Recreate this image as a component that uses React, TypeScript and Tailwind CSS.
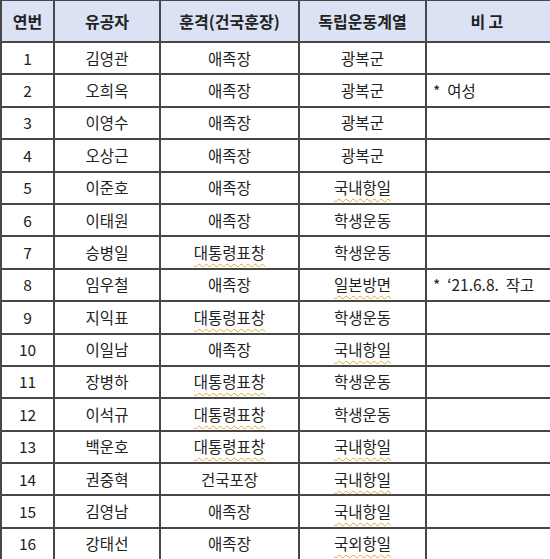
import clsx from 'clsx';

type Row = {
  no: number;
  name: string;
  grade: string;
  field: string;
  note?: string;
};

const ROWS: Row[] = [
  { no: 1, name: '김영관', grade: '애족장', field: '광복군' },
  { no: 2, name: '오희옥', grade: '애족장', field: '광복군', note: '*  여성' },
  { no: 3, name: '이영수', grade: '애족장', field: '광복군' },
  { no: 4, name: '오상근', grade: '애족장', field: '광복군' },
  { no: 5, name: '이준호', grade: '애족장', field: '국내항일' },
  { no: 6, name: '이태원', grade: '애족장', field: '학생운동' },
  { no: 7, name: '승병일', grade: '대통령표창', field: '학생운동' },
  { no: 8, name: '임우철', grade: '애족장', field: '일본방면', note: '*  ‘21.6.8.  작고' },
  { no: 9, name: '지익표', grade: '대통령표창', field: '학생운동' },
  { no: 10, name: '이일남', grade: '애족장', field: '국내항일' },
  { no: 11, name: '장병하', grade: '대통령표창', field: '학생운동' },
  { no: 12, name: '이석규', grade: '대통령표창', field: '학생운동' },
  { no: 13, name: '백운호', grade: '대통령표창', field: '국내항일' },
  { no: 14, name: '권중혁', grade: '건국포장', field: '국내항일' },
  { no: 15, name: '김영남', grade: '애족장', field: '국내항일' },
  { no: 16, name: '강태선', grade: '애족장', field: '국외항일' },
];

// words the spell checker flagged in the original sheet
const FLAGGED = new Set(['대통령표창', '국내항일', '일본방면', '국외항일']);

function Flagged({ text }: { text: string }) {
  return (
    <span
      className={clsx(
        FLAGGED.has(text) &&
          'underline decoration-wavy decoration-[#e3a23a] decoration-1 underline-offset-[4px]',
      )}
    >
      {text}
    </span>
  );
}

const cell = 'border-2 border-[#474747] p-0';

export default function App() {
  return (
    <div className="w-[550px] h-[559px] overflow-hidden bg-white font-['Noto_Sans_CJK_KR','Noto_Sans',sans-serif] text-[#222]">
      <table className="table-fixed border-collapse w-[550px] -mt-px">
        <colgroup>
          <col className="w-[53px]" />
          <col className="w-[106px]" />
          <col className="w-[139px]" />
          <col className="w-[127px]" />
          <col className="w-[125px]" />
        </colgroup>
        <thead>
          <tr className="h-[42px] bg-[#dae2f3] text-[16px] font-bold">
            <th className={cell}>연번</th>
            <th className={cell}>유공자</th>
            <th className={cell}>훈격(건국훈장)</th>
            <th className={cell}>독립운동계열</th>
            <th className={clsx(cell, 'tracking-[0.2em]')}>비고</th>
          </tr>
        </thead>
        <tbody className="text-[15.5px]">
          {ROWS.map((r) => (
            <tr key={r.no} className="h-[32.4px]">
              <td className={clsx(cell, 'text-center')}>{r.no}</td>
              <td className={clsx(cell, 'text-center')}>{r.name}</td>
              <td className={clsx(cell, 'text-center')}>
                <Flagged text={r.grade} />
              </td>
              <td className={clsx(cell, 'text-center')}>
                <Flagged text={r.field} />
              </td>
              <td className={clsx(cell, 'pl-[6px] whitespace-pre')}>{r.note ?? ''}</td>
            </tr>
          ))}
        </tbody>
      </table>
    </div>
  );
}
